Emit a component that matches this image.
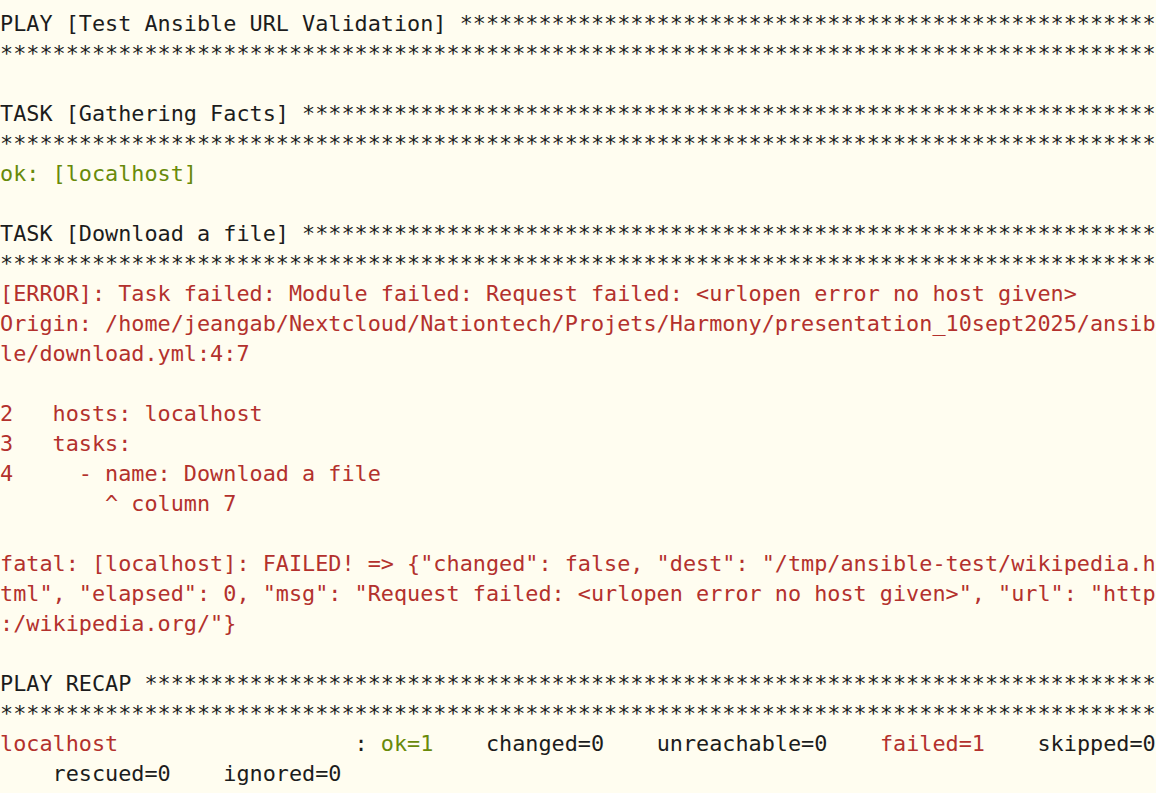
const COLS = 88;

type Seg = { text: string; tone?: "red" | "green" };

const stars = (n: number) => "*".repeat(n);
const header = (label: string) => label + " " + stars(COLS - label.length - 1);

const toneClass = {
  red: "text-[#b3312d]",
  green: "text-[#688a0a]",
};

const lines: Seg[][] = [
  [{ text: header("PLAY [Test Ansible URL Validation]") }],
  [{ text: stars(COLS) }],
  [],
  [{ text: header("TASK [Gathering Facts]") }],
  [{ text: stars(COLS) }],
  [{ text: "ok: [localhost]", tone: "green" }],
  [],
  [{ text: header("TASK [Download a file]") }],
  [{ text: stars(COLS) }],
  [{ text: "[ERROR]: Task failed: Module failed: Request failed: <urlopen error no host given>", tone: "red" }],
  [{ text: "Origin: /home/jeangab/Nextcloud/Nationtech/Projets/Harmony/presentation_10sept2025/ansib", tone: "red" }],
  [{ text: "le/download.yml:4:7", tone: "red" }],
  [],
  [{ text: "2   hosts: localhost", tone: "red" }],
  [{ text: "3   tasks:", tone: "red" }],
  [{ text: "4     - name: Download a file", tone: "red" }],
  [{ text: "        ^ column 7", tone: "red" }],
  [],
  [{ text: 'fatal: [localhost]: FAILED! => {"changed": false, "dest": "/tmp/ansible-test/wikipedia.h', tone: "red" }],
  [{ text: 'tml", "elapsed": 0, "msg": "Request failed: <urlopen error no host given>", "url": "http', tone: "red" }],
  [{ text: ':/wikipedia.org/"}', tone: "red" }],
  [],
  [{ text: header("PLAY RECAP") }],
  [{ text: stars(COLS) }],
  [
    { text: "localhost", tone: "red" },
    { text: "                  : " },
    { text: "ok=1", tone: "green" },
    { text: "    changed=0    unreachable=0    " },
    { text: "failed=1", tone: "red" },
    { text: "    skipped=0" },
  ],
  [{ text: "    rescued=0    ignored=0" }],
];

export default function App() {
  return (
    <div className="min-h-[793px] w-full overflow-hidden bg-[#fffdf0] pt-[9px] font-['DejaVu_Sans_Mono',monospace] text-[21.82px] text-[#1c1c1c]">
      {lines.map((segs, i) => (
        <div key={i} className="h-[30px] whitespace-pre leading-[30px]">
          {segs.map((s, j) => (
            <span key={j} className={s.tone ? toneClass[s.tone] : undefined}>
              {s.text}
            </span>
          ))}
        </div>
      ))}
    </div>
  );
}
